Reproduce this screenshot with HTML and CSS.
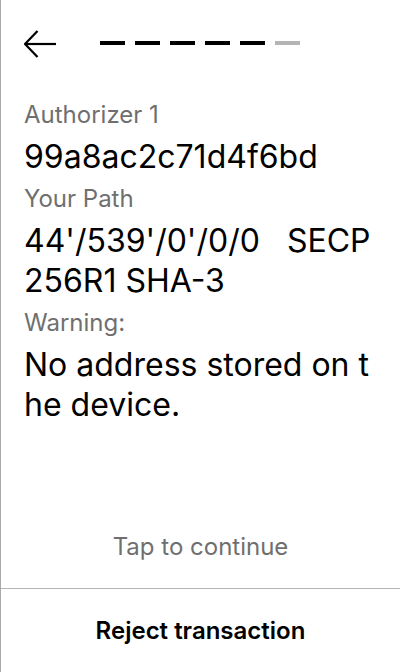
FILE: index.html
```html
<!DOCTYPE html>
<html>
<head>
<meta charset="utf-8">
<link rel="stylesheet" href="styles.css">
</head>
<body>
<div class="screen">
  <div class="header">
    <svg class="back" width="32" height="28" viewBox="0 0 32 28" fill="none" stroke="#000" stroke-width="2.2">
      <path d="M13.5 1 L1 14 L13.5 27" stroke-linejoin="miter"/>
      <path d="M1 14 H32"/>
    </svg>
    <div class="progress">
      <span class="dash"></span>
      <span class="dash"></span>
      <span class="dash"></span>
      <span class="dash"></span>
      <span class="dash"></span>
      <span class="dash dash-off"></span>
    </div>
  </div>
  <div class="content">
    <div class="item">
      <div class="label">Authorizer 1</div>
      <div class="value">99a8ac2c71d4f6bd</div>
    </div>
    <div class="item">
      <div class="label">Your Path</div>
      <div class="value">44'/539'/0'/0/0&nbsp;&nbsp;&nbsp;SECP<br>256R1 SHA-3</div>
    </div>
    <div class="item">
      <div class="label">Warning:</div>
      <div class="value">No address stored on t<br>he device.</div>
    </div>
  </div>
  <div class="tap">Tap to continue</div>
  <div class="footer">Reject transaction</div>
</div>
</body>
</html>
```

FILE: styles.css
```css
html, body {
  margin: 0;
  padding: 0;
  background: #fff;
}
body {
  font-family: Inter, "Noto Sans", sans-serif;
  color: #000;
}
.screen {
  width: 400px;
  height: 672px;
  box-sizing: border-box;
  border-left: 1px solid #aaaaaa;
  display: flex;
  flex-direction: column;
  overflow: hidden;
}
.header {
  height: 86px;
  display: flex;
  align-items: center;
  padding-left: 23px;
}
.back {
  display: block;
  margin-top: 1px;
}
.progress {
  display: flex;
  gap: 10px;
  margin-left: 44px;
}
.dash {
  width: 25px;
  height: 4px;
  background: #000;
}
.dash-off {
  background: #b4b4b4;
}
.content {
  flex: 1;
  padding: 13px 23px 0;
  display: flex;
  flex-direction: column;
}
.item {
  display: flex;
  flex-direction: column;
  gap: 6px;
  margin-bottom: 6px;
}
.label {
  font-size: 24px;
  line-height: 32px;
  color: #6f6f6f;
}
.value {
  font-size: 32px;
  line-height: 40px;
  color: #000;
}
.tap {
  text-align: center;
  font-size: 24px;
  line-height: 32px;
  color: #6f6f6f;
  padding-bottom: 25px;
}
.footer {
  height: 83px;
  border-top: 1px solid #b4b4b4;
  display: flex;
  align-items: center;
  justify-content: center;
  font-size: 24px;
  font-weight: 600;
  line-height: 32px;
}
```
